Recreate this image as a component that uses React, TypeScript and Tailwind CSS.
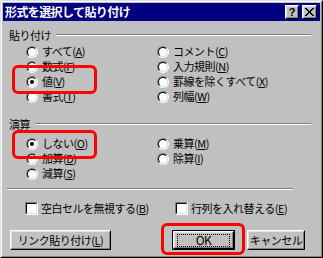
import React from "react";

const Mn = ({ k }: { k: string }) => (
  <>
    (<span className="underline underline-offset-[1px]">{k}</span>)
  </>
);

function RadioCircle({ checked }: { checked?: boolean }) {
  return (
    <span className="relative block w-[12px] h-[12px] shrink-0 rounded-full border border-t-[#808080] border-l-[#808080] border-r-white border-b-white">
      <span className="absolute inset-0 rounded-full border border-t-black border-l-black border-r-[#dfdfdf] border-b-[#dfdfdf] bg-white flex items-center justify-center">
        {checked && <span className="block w-[4px] h-[4px] rounded-full bg-black" />}
      </span>
    </span>
  );
}

function Radio({ label, k, checked }: { label: string; k: string; checked?: boolean }) {
  return (
    <div className="flex items-center h-[15px]">
      <RadioCircle checked={checked} />
      <span className="ml-[4px] text-[11px] leading-[15px] tracking-[-0.5px] whitespace-nowrap">
        {label}
        <Mn k={k} />
      </span>
    </div>
  );
}

function CheckBox({ label, k }: { label: string; k: string }) {
  return (
    <div className="flex items-center h-[13px]">
      <span className="relative block w-[13px] h-[13px] shrink-0 border border-t-[#808080] border-l-[#808080] border-r-white border-b-white">
        <span className="absolute inset-0 border border-t-black border-l-black border-r-[#dfdfdf] border-b-[#dfdfdf] bg-white" />
      </span>
      <span className="ml-[3px] text-[11px] leading-[13px] tracking-[-0.5px] whitespace-nowrap">
        {label}
        <Mn k={k} />
      </span>
    </div>
  );
}

function Header({ label }: { label: string }) {
  return (
    <div className="flex items-center h-[12px] pl-[6px] pr-[9px]">
      <span className="text-[11px] leading-[12px] tracking-[-0.5px] whitespace-nowrap">{label}</span>
      <div className="flex-1 ml-[5px] h-[2px] border-t border-t-[#808080] bg-white" />
    </div>
  );
}

function Btn({
  children,
  w,
  def,
}: {
  children: React.ReactNode;
  w: string;
  def?: boolean;
}) {
  const inner = (
    <div className="h-full w-full border border-t-white border-l-white border-r-black border-b-black">
      <div className="h-full w-full border border-t-[#dfdfdf] border-l-[#dfdfdf] border-r-[#808080] border-b-[#808080] flex items-center justify-center">
        {def ? (
          <div className="h-[13px] w-[calc(100%-4px)] border border-dotted border-black flex items-center justify-center">
            {children}
          </div>
        ) : (
          children
        )}
      </div>
    </div>
  );
  return (
    <div className={`${w} h-[20px] text-[11px] leading-[12px] tracking-[-0.5px] whitespace-nowrap ${def ? "border border-black" : ""}`}>
      {inner}
    </div>
  );
}

export default function App() {
  return (
    <div className="relative w-[323px] h-[258px] bg-[#c0c0c0] text-black font-[family-name:'Noto_Sans_CJK_JP',sans-serif] overflow-hidden">
      <div className="w-full h-full border border-t-[#dfdfdf] border-l-[#dfdfdf] border-r-black border-b-black">
        <div className="w-full h-full border border-t-white border-l-white border-r-[#808080] border-b-[#808080] p-[1px] flex flex-col">
          {/* title bar */}
          <div className="h-[18px] bg-[#000080] flex items-center pl-[2px] pr-[3px]">
            <span className="text-white font-bold text-[12px] leading-[14px] tracking-[-0.6px] whitespace-nowrap">
              形式を選択して貼り付け
            </span>
            <div className="ml-auto flex items-center">
              <div className="w-[14px] h-[14px] border border-t-white border-l-white border-r-black border-b-black">
                <div className="w-full h-full border border-t-[#dfdfdf] border-l-[#dfdfdf] border-r-[#808080] border-b-[#808080] bg-[#c0c0c0] flex items-center justify-center">
                  <span className="font-[family-name:'Liberation_Sans',sans-serif] font-bold text-[11px] leading-[10px]">?</span>
                </div>
              </div>
              <div className="ml-[3px] w-[15px] h-[14px] border border-t-white border-l-white border-r-black border-b-black">
                <div className="w-full h-full border border-t-[#dfdfdf] border-l-[#dfdfdf] border-r-[#808080] border-b-[#808080] bg-[#c0c0c0] flex items-center justify-center">
                  <svg width="9" height="8" viewBox="0 0 9 8" shapeRendering="crispEdges">
                    <path
                      d="M0 0h2v1h-2zM7 0h2v1h-2zM1 1h2v1h-2zM6 1h2v1h-2zM2 2h2v1h-2zM5 2h2v1h-2zM3 3h3v1h-3zM3 4h3v1h-3zM2 5h2v1h-2zM5 5h2v1h-2zM1 6h2v1h-2zM6 6h2v1h-2zM0 7h2v1h-2zM7 7h2v1h-2z"
                      fill="#000"
                    />
                  </svg>
                </div>
              </div>
            </div>
          </div>

          {/* body */}
          <div className="flex flex-col">
            <div className="mt-[8px]">
              <Header label="貼り付け" />
            </div>
            <div className="mt-[3px] pl-[23px] grid grid-cols-[131px_1fr]">
              <div className="flex flex-col">
                <Radio label="すべて" k="A" />
                <Radio label="数式" k="F" />
                <Radio label="値" k="V" checked />
                <Radio label="書式" k="T" />
              </div>
              <div className="flex flex-col">
                <Radio label="コメント" k="C" />
                <Radio label="入力規則" k="N" />
                <Radio label="罫線を除くすべて" k="X" />
                <Radio label="列幅" k="W" />
              </div>
            </div>

            <div className="mt-[14px]">
              <Header label="演算" />
            </div>
            <div className="mt-[6px] pl-[23px] grid grid-cols-[131px_1fr]">
              <div className="flex flex-col">
                <Radio label="しない" k="O" checked />
                <Radio label="加算" k="D" />
                <Radio label="減算" k="S" />
              </div>
              <div className="flex flex-col">
                <Radio label="乗算" k="M" />
                <Radio label="除算" k="I" />
              </div>
            </div>

            <div className="mt-[7px] ml-[4px] mr-[27px] h-[2px] border-t border-t-[#808080] bg-white" />

            <div className="mt-[12px] pl-[22px] grid grid-cols-[150px_1fr]">
              <CheckBox label="空白セルを無視する" k="B" />
              <CheckBox label="行列を入れ替える" k="E" />
            </div>

            <div className="mt-[15px] pl-[7px] flex items-center">
              <Btn w="w-[101px]">
                <span>
                  リンク貼り付け
                  <Mn k="L" />
                </span>
              </Btn>
              <div className="ml-[61px]">
                <Btn w="w-[63px]" def>
                  <span className="text-[12px]">OK</span>
                </Btn>
              </div>
              <div className="ml-[12px]">
                <Btn w="w-[58px]">
                  <span>キャンセル</span>
                </Btn>
              </div>
            </div>
          </div>
        </div>
      </div>

      {/* red annotation marks */}
      <div className="absolute left-[12px] top-[65px] w-[85px] h-[29px] border-[3px] border-[#ff0000] rounded-[6px]" />
      <div className="absolute left-[12px] top-[130px] w-[85px] h-[29px] border-[3px] border-[#ff0000] rounded-[6px]" />
      <div className="absolute left-[161px] top-[223px] w-[84px] h-[32px] border-[3px] border-[#ff0000] rounded-[6px]" />
    </div>
  );
}
